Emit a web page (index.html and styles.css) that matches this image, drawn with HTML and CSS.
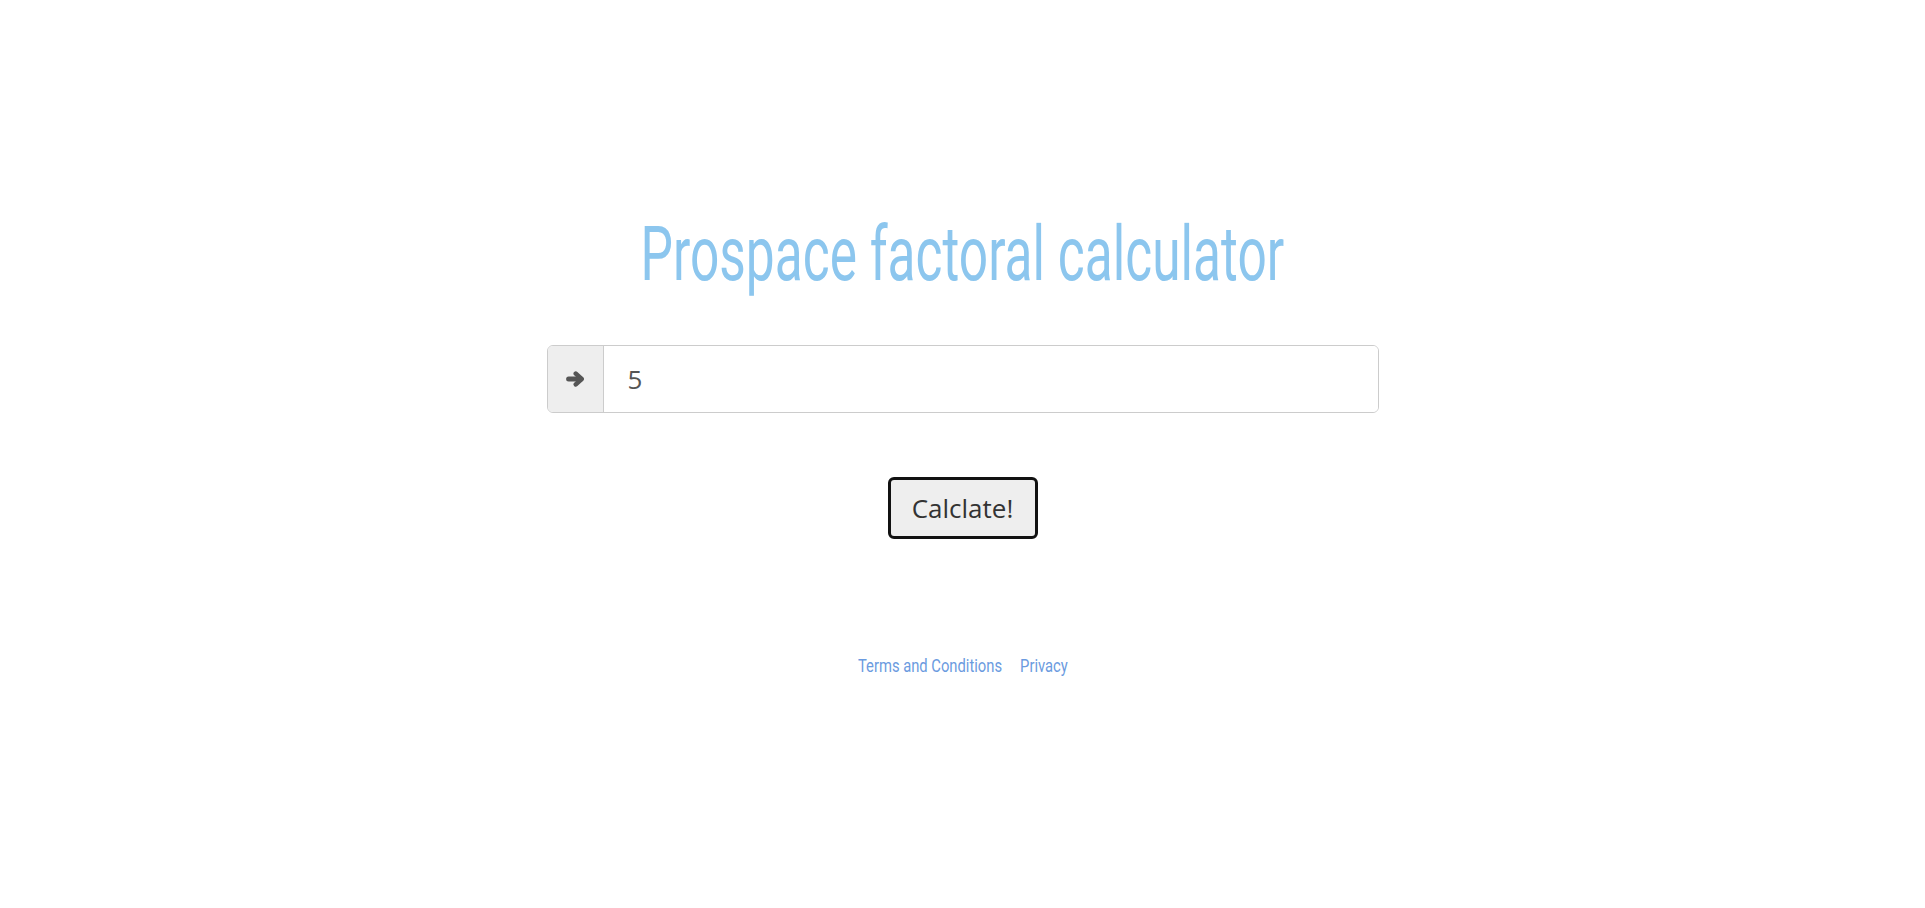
FILE: index.html
```html
<!DOCTYPE html>
<html lang="en">
<head>
<meta charset="utf-8">
<title>Prospace factoral calculator</title>
<link rel="stylesheet" href="styles.css">
</head>
<body>
<main class="page">
  <h1 class="title"><span class="title-text">Prospace factoral calculator</span></h1>
  <form class="calc">
    <div class="input-group">
      <span class="addon">
        <svg width="19" height="16" viewBox="0 0 19 16" aria-hidden="true"><path d="M2.6 8 H15" stroke="#555" stroke-width="5" stroke-linecap="round"/><path d="M9.8 2.6 L15.6 8 L9.8 13.4" fill="none" stroke="#555" stroke-width="4.6" stroke-linecap="round" stroke-linejoin="round"/></svg>
      </span>
      <input class="field" type="text" value="5">
    </div>
    <button class="btn" type="button">Calclate!</button>
  </form>
  <footer class="links">
    <a href="#">Terms and Conditions</a>
    <a href="#">Privacy</a>
  </footer>
</main>
</body>
</html>
```
FILE: styles.css
```css
html, body {
  margin: 0;
  padding: 0;
  background: #fff;
}
.page {
  display: flex;
  flex-direction: column;
  align-items: center;
  padding-top: 215px;
  font-family: "Open Sans", "Liberation Sans", sans-serif;
}
.title {
  margin: 0;
  font-family: Roboto, "Liberation Sans", sans-serif;
  font-weight: 400;
  font-size: 76px;
  line-height: 78px;
  color: #8cc6ee;
}
.title-text {
  display: inline-block;
  transform: scaleX(0.677);
  white-space: nowrap;
}
.calc {
  display: flex;
  flex-direction: column;
  align-items: center;
  margin-top: 52px;
}
.input-group {
  display: flex;
  width: 832px;
  height: 68px;
  box-sizing: border-box;
  border: 1px solid #ccc;
  border-radius: 6px;
  overflow: hidden;
}
.addon {
  display: flex;
  align-items: center;
  justify-content: center;
  width: 55px;
  background: #eee;
  border-right: 1px solid #ccc;
}
.field {
  flex: 1;
  border: 0;
  outline: none;
  padding: 0 24px;
  font-family: "Open Sans", sans-serif;
  font-size: 26px;
  color: #555;
  background: #fff;
}
.btn {
  margin-top: 64px;
  width: 150px;
  height: 62px;
  box-sizing: border-box;
  border: 3px solid #111;
  border-radius: 6px;
  background: #eee;
  font-family: "Open Sans", sans-serif;
  font-size: 26px;
  color: #333;
  padding: 0;
}
.links {
  display: flex;
  gap: 22px;
  margin-top: 116px;
  font-family: Roboto, sans-serif;
  font-weight: 400;
  font-size: 18px;
  line-height: 21px;
  transform: scaleX(0.82);
}
.links a {
  color: #6b9be0;
  text-decoration: none;
}
```
